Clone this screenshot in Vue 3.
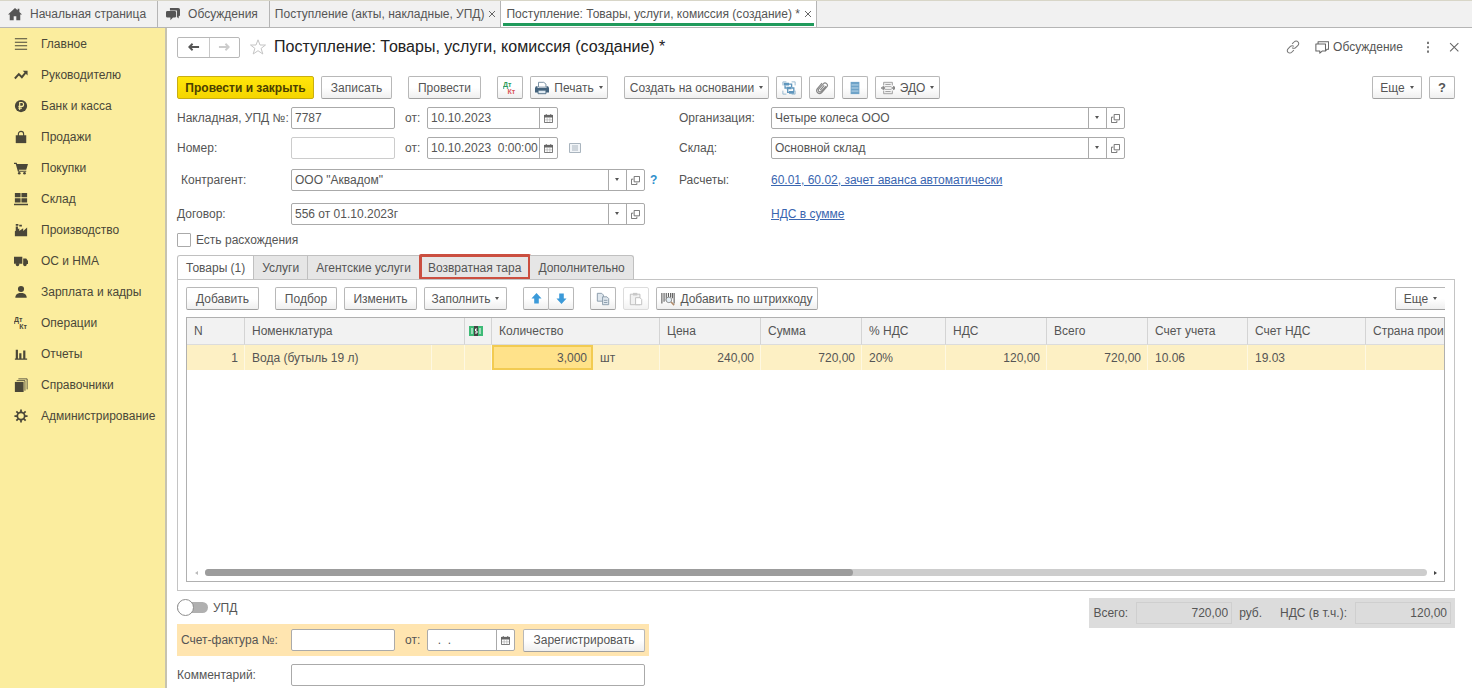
<template>
  <div class="app">
    <nav class="tabs-bar">
      <button
        v-for="tab in windowTabs"
        :key="tab.title"
        class="window-tab"
        :class="{ active: tab.active, closable: tab.closable }"
      >
        <svg v-if="tab.icon" class="icon" viewBox="0 0 16 16" v-html="tab.icon"></svg>
        <span>{{ tab.title }}</span>
        <svg v-if="tab.closable" class="tab-close" viewBox="0 0 8 8"><path d="M1 1l6 6M7 1L1 7" /></svg>
      </button>
    </nav>

    <div class="body">
      <aside class="sidebar">
        <a v-for="item in sections" :key="item.title" href="#" class="section">
          <svg class="icon" viewBox="0 0 16 16" v-html="item.icon"></svg>
          <span>{{ item.title }}</span>
        </a>
      </aside>

      <main class="form">
        <header class="form-header">
          <div class="history">
            <button aria-label="Назад">
              <svg viewBox="0 0 14 10"><path d="M13 5H3M6 1.5L2.5 5L6 8.5" fill="none" stroke="#555" stroke-width="2" /></svg>
            </button>
            <button aria-label="Вперед">
              <svg viewBox="0 0 14 10"><path d="M1 5h10M8 1.5L11.5 5L8 8.5" fill="none" stroke="#ccc" stroke-width="2" /></svg>
            </button>
          </div>
          <svg class="star" viewBox="0 0 16 16"><path d="M8 .8l2 5.200h5.500l-4.400 3.400 1.700 5.600L8 11.700 3.200 15l1.700-5.600L.5 6H6z" /></svg>
          <h1>Поступление: Товары, услуги, комиссия (создание) *</h1>
          <div class="header-actions">
            <button class="plain" aria-label="Ссылка">
              <svg class="icon" viewBox="0 0 16 16"><path d="M7 4.500l2.500-2.500a2.800 2.800 0 0 1 4.200 0a2.800 2.800 0 0 1 0 4L11 8.700a2.800 2.800 0 0 1-4 0M9 11.500l-2.500 2.500a2.800 2.800 0 0 1-4.200 0a2.800 2.800 0 0 1 0-4L5 7.300a2.800 2.800 0 0 1 4 0" fill="none" stroke="#777" stroke-width="1.200" /></svg>
            </button>
            <button class="plain discuss">
              <svg class="icon" viewBox="0 0 16 16"><path d="M1 4.500h11v8H8.500L5.500 15v-2.500H1zM3.500 4.500v-2.500h12v8.500H14l-2 2" fill="none" stroke="#666" stroke-width="1.200" stroke-linejoin="round" /></svg>
              Обсуждение
            </button>
            <button class="plain" aria-label="Меню">
              <svg class="icon" viewBox="0 0 16 16"><path d="M7 2h2v2.500H7zM7 7h2v2.500H7zM7 12h2v2.500H7z" fill="#666" /></svg>
            </button>
            <button class="plain" aria-label="Закрыть">
              <svg class="icon" viewBox="0 0 16 16"><path d="M3.500 3.500l9.500 9.500M13 3.500l-9.500 9.500" stroke="#666" stroke-width="1.200" /></svg>
            </button>
          </div>
        </header>

        <div class="toolbar">
          <button class="btn primary">Провести и закрыть</button>
          <button class="btn w71">Записать</button>
          <button class="btn w73 gap">Провести</button>
          <button class="btn square gap" aria-label="Дт Кт">
            <svg class="icon" viewBox="0 0 16 16">
              <text class="dtkt" x="0" y="7" fill="#2c9a5a">Дт</text>
              <text class="dtkt" x="5" y="15" fill="#d9545a">Кт</text>
            </svg>
          </button>
          <button class="btn w78">
            <svg class="icon" viewBox="0 0 16 16">
              <path d="M4 1.500h6l2.500 2V7H4z" fill="#fff" stroke="#6c8599" />
              <path d="M1 6h2v2h10V6h2l1 2v5H0V8z" fill="#44637d" />
              <path d="M3.500 10.500h9v4h-9z" fill="#dfeaf2" stroke="#44637d" />
            </svg>
            Печать <i class="caret"></i>
          </button>
          <button class="btn w145 gap">Создать на основании <i class="caret"></i></button>
          <button class="btn square" aria-label="Структура подчиненности">
            <svg class="icon" viewBox="0 0 16 16">
              <path d="M1 5V1h4M15 11v4h-4M11 1h4v4M1 11v4h4" fill="none" stroke="#8fb2cc" />
              <path d="M2 2h6v3H2zM5 6.500h6v3H5zM8 11.500h6v3H8z" fill="#5f96bd" />
              <path d="M8 3.500h3V7M3.500 5v3H5M11 8h2.500v4M6.500 9v4H8" fill="none" stroke="#5f96bd" stroke-width="1.500" />
            </svg>
          </button>
          <button class="btn square" aria-label="Файлы">
            <svg class="icon" viewBox="0 0 16 16"><path d="M12.500 6L7 12a2 2 0 0 1-3-2.500L9.500 3.200a2.600 2.600 0 0 1 4 3.500L7.500 13.500a3.400 3.400 0 0 1-5-4.500L8 2.500M10.500 5L6 10.500" fill="none" stroke="#888" stroke-width="1.300" /></svg>
          </button>
          <button class="btn square" aria-label="Список">
            <svg class="icon" viewBox="0 0 16 16">
              <path d="M3 1h10v14H3z" fill="#6ea3c8" />
              <path d="M4 4.500h8M4 8h8M4 11.500h8" stroke="#c5deee" />
            </svg>
          </button>
          <button class="btn w65">
            <svg class="icon" viewBox="0 0 16 16">
              <path d="M3 5V1.500h10V5M3 11v3.500h10V11" fill="#eee" stroke="#999" />
              <path d="M5 4h6M4 6.500h8M4 9.500h8M5 12h6" stroke="#999" />
              <path d="M0 8h4M12 8h4M2 6l2 2-2 2M14 6l2 2-2 2" fill="none" stroke="#888" stroke-width="1.500" />
            </svg>
            ЭДО <i class="caret"></i>
          </button>
          <span class="spacer"></span>
          <button class="btn w50">Еще <i class="caret"></i></button>
          <button class="btn square help">?</button>
        </div>

        <div class="fields">
          <div class="field-row">
            <label for="invoice">Накладная, УПД №:</label>
            <input id="invoice" v-model="doc.invoice" class="box short" type="text" />
            <label for="invoice-date" class="from">от:</label>
            <span class="box date">
              <input id="invoice-date" v-model="doc.invoiceDate" type="text" />
              <button aria-label="Календарь"><svg viewBox="0 0 10 10" v-html="calendar"></svg></button>
            </span>
          </div>
          <div class="field-row">
            <label for="org" class="right-label">Организация:</label>
            <span class="box combo">
              <span class="select-wrap">
                <select id="org"><option>Четыре колеса ООО</option></select>
                <i class="caret"></i>
              </span>
              <button aria-label="Открыть"><svg viewBox="0 0 10 10" v-html="openIcon"></svg></button>
            </span>
          </div>

          <div class="field-row">
            <label for="number">Номер:</label>
            <input id="number" v-model="doc.number" class="box short muted" type="text" />
            <label for="date" class="from">от:</label>
            <span class="box date">
              <input id="date" v-model="doc.date" type="text" />
              <button aria-label="Календарь"><svg viewBox="0 0 10 10" v-html="calendar"></svg></button>
            </span>
            <svg class="note" viewBox="0 0 12 10">
              <path d="M.5.5h11v9H.5z" fill="#f2f5f8" stroke="#a9b4be" />
              <path d="M3 3h6M3 5h6M3 7h6" stroke="#a9b4be" />
            </svg>
          </div>
          <div class="field-row">
            <label for="store" class="right-label">Склад:</label>
            <span class="box combo">
              <span class="select-wrap">
                <select id="store"><option>Основной склад</option></select>
                <i class="caret"></i>
              </span>
              <button aria-label="Открыть"><svg viewBox="0 0 10 10" v-html="openIcon"></svg></button>
            </span>
          </div>

          <div class="field-row tall">
            <label for="partner" class="indent">Контрагент:</label>
            <span class="box combo">
              <span class="select-wrap">
                <select id="partner"><option>ООО "Аквадом"</option></select>
                <i class="caret"></i>
              </span>
              <button aria-label="Открыть"><svg viewBox="0 0 10 10" v-html="openIcon"></svg></button>
            </span>
            <button class="plain hint">?</button>
          </div>
          <div class="field-row tall">
            <span class="right-label">Расчеты:</span>
            <a href="#">60.01, 60.02, зачет аванса автоматически</a>
          </div>

          <div class="field-row tall">
            <label for="contract">Договор:</label>
            <span class="box combo">
              <span class="select-wrap">
                <select id="contract"><option>556 от 01.10.2023г</option></select>
                <i class="caret"></i>
              </span>
              <button aria-label="Открыть"><svg viewBox="0 0 10 10" v-html="openIcon"></svg></button>
            </span>
          </div>
          <div class="field-row tall">
            <span class="right-label"></span>
            <a href="#">НДС в сумме</a>
          </div>
        </div>

        <label class="check">
          <input v-model="doc.hasDiff" type="checkbox" />
          Есть расхождения
        </label>

        <div class="page-tabs">
          <button
            v-for="page in pages"
            :key="page"
            :class="{ current: page === currentPage, marked: page === 'Возвратная тара' }"
            @click="currentPage = page"
          >
            {{ page }}
          </button>
        </div>

        <section class="panel">
          <div class="panel-toolbar">
            <button class="btn w73">Добавить</button>
            <button class="btn w62 gap">Подбор</button>
            <button class="btn w73">Изменить</button>
            <button class="btn w83">Заполнить <i class="caret"></i></button>
            <div class="pair gap">
              <button class="btn square" aria-label="Вверх">
                <svg class="icon small" viewBox="0 0 12 12"><path d="M6 0l5.500 6H8.500v5.500h-5V6H.5z" fill="#3b9ad9" /></svg>
              </button>
              <button class="btn square" aria-label="Вниз">
                <svg class="icon small" viewBox="0 0 12 12"><path d="M6 12L.5 6h3V.5h5V6h3z" fill="#3b9ad9" /></svg>
              </button>
            </div>
            <button class="btn square gap" aria-label="Копировать">
              <svg class="icon" viewBox="0 0 16 16">
                <path d="M1.500 1.500h5l2 2v7h-7z" fill="#dfe7ee" stroke="#8496a5" />
                <path d="M7.500 5.500h5l2 2v7h-7z" fill="#dfe7ee" stroke="#8496a5" />
                <path d="M9 9.500h4M9 12h4" stroke="#8496a5" />
              </svg>
            </button>
            <button class="btn square faded" aria-label="Вставить">
              <svg class="icon" viewBox="0 0 16 16">
                <path d="M1.500 2.500h11v12h-11z" fill="#eee" stroke="#aaa" />
                <path d="M4.500 1h5v3h-5z" fill="#bbb" />
                <path d="M7.500 6.500h5l2 2v6h-7z" fill="#fff" stroke="#aaa" />
              </svg>
            </button>
            <button class="btn w162">
              <svg class="icon" viewBox="0 0 16 16">
                <path d="M1 1v12M3.500 1v10M6 1v9M8.500 1v6M11 1v5M13 1v6M15 1v12" stroke="#555" stroke-width="1.200" />
                <circle cx="9" cy="9" r="3.200" fill="#e4eef5" stroke="#888" />
                <path d="M11.500 11.500l3.500 3.500" stroke="#b08b6a" stroke-width="1.800" />
              </svg>
              Добавить по штрихкоду
            </button>
            <span class="spacer"></span>
            <button class="btn w50 cut">Еще <i class="caret"></i></button>
          </div>

          <div class="grid">
            <table>
              <colgroup>
                <col v-for="(w, i) in columnWidths" :key="i" :style="{ width: w + 'px' }" />
              </colgroup>
              <thead>
                <tr>
                  <th>N</th>
                  <th colspan="2">Номенклатура</th>
                  <th class="mark">
                    <svg viewBox="0 0 14 10">
                      <path d="M0 0h14v10H0z" fill="#3dba76" />
                      <path d="M2 2h2v6H2zM10 2h2v6h-2z" fill="#9fdcba" />
                      <path d="M5 0h4v10H5z" fill="#444" />
                      <path d="M8 3H6.500v2h1.500v2H6" fill="none" stroke="#fff" />
                    </svg>
                  </th>
                  <th colspan="2">Количество</th>
                  <th>Цена</th>
                  <th>Сумма</th>
                  <th>% НДС</th>
                  <th>НДС</th>
                  <th>Всего</th>
                  <th>Счет учета</th>
                  <th>Счет НДС</th>
                  <th>Страна происхождения</th>
                </tr>
              </thead>
              <tbody>
                <tr v-for="row in goods" :key="row.n">
                  <td class="num">{{ row.n }}</td>
                  <td>{{ row.name }}</td>
                  <td></td>
                  <td></td>
                  <td class="num editing">{{ row.count }}</td>
                  <td>{{ row.unit }}</td>
                  <td class="num">{{ row.price }}</td>
                  <td class="num">{{ row.sum }}</td>
                  <td>{{ row.vatRate }}</td>
                  <td class="num">{{ row.vat }}</td>
                  <td class="num">{{ row.total }}</td>
                  <td>{{ row.account }}</td>
                  <td>{{ row.vatAccount }}</td>
                  <td></td>
                </tr>
              </tbody>
            </table>
            <div class="scroll">
              <i class="arrow left"></i>
              <div class="track"><div class="thumb"></div></div>
              <i class="arrow right"></i>
            </div>
          </div>
        </section>

        <footer class="bottom">
          <div class="bottom-left">
            <label class="toggle">
              <input v-model="doc.upd" type="checkbox" />
              УПД
            </label>
            <div class="invoice-row">
              <label for="sf" class="indent">Счет-фактура №:</label>
              <input id="sf" v-model="doc.sf" class="box short" type="text" />
              <label for="sf-date" class="from">от:</label>
              <span class="box date small-date">
                <input id="sf-date" v-model="doc.sfDate" type="text" />
                <button aria-label="Календарь"><svg viewBox="0 0 10 10" v-html="calendar"></svg></button>
              </span>
              <button class="btn w122">Зарегистрировать</button>
            </div>
            <div class="comment-row">
              <label for="comment">Комментарий:</label>
              <input id="comment" v-model="doc.comment" class="box wide" type="text" />
            </div>
          </div>
          <div class="totals">
            <label for="total">Всего:</label>
            <input id="total" value="720,00" type="text" readonly />
            <span class="currency">руб.</span>
            <label for="total-vat">НДС (в т.ч.):</label>
            <input id="total-vat" value="120,00" type="text" readonly />
          </div>
        </footer>
      </main>
    </div>
  </div>
</template>

<script setup>
import { ref, reactive } from 'vue'

const windowTabs = [
  { title: 'Начальная страница', icon: '<path d="M8 1L0 8.500h2V15h4.500v-4.500h3V15H14V8.500h2L13 5.700V2h-2v1.800z"/>' },
  { title: 'Обсуждения', icon: '<path d="M4.500 1H14q2 0 2 2v6q0 1.500-1.500 1.500V13l-2-1.500V4h-8z"/><path d="M1.500 4.500h8.500q1.500 0 1.500 1.500v4.500q0 1.500-1.500 1.500H8L5 15v-3H1.500Q0 12 0 10.500V6q0-1.500 1.500-1.500z"/>' },
  { title: 'Поступление (акты, накладные, УПД)', closable: true },
  { title: 'Поступление: Товары, услуги, комиссия (создание) *', closable: true, active: true }
]

const sections = [
  { title: 'Главное', icon: '<path d="M1 1.500h14v1H1zM1 5.500h14v1H1zM1 9.500h14v1H1zM1 13.500h14v1H1z"/>' },
  { title: 'Руководителю', icon: '<path d="M1 12l4.500-5 3.500 3.500 4-5" fill="none" stroke="currentColor" stroke-width="2.200"/><path d="M10 3h5.500v5.500z"/>' },
  { title: 'Банк и касса', icon: '<circle cx="8" cy="8" r="7"/><path d="M6.500 12.500V4h2.200a2.200 2.200 0 0 1 0 4.500H5M5 10.500h4" fill="none" stroke="#fbed9e" stroke-width="1.300"/>' },
  { title: 'Продажи', icon: '<path d="M2 6h12v9H2z"/><path d="M5 8V4.500a3 3 0 0 1 6 0V8" fill="none" stroke="currentColor" stroke-width="1.300"/>' },
  { title: 'Покупки', icon: '<path d="M0 2h3l.6 1.500H16L14 10H5.500l.3 1H14v1.300H4.500L2 3.300H0z"/><circle cx="6" cy="14" r="1.500"/><circle cx="12" cy="14" r="1.500"/>' },
  { title: 'Склад', icon: '<path d="M1 1h6.500v5H1zM8.500 1H15v5H8.500zM1 7h6.500v5H1zM8.500 7H15v5H8.500zM0 13.500h16V15H0z"/>' },
  { title: 'Производство', icon: '<path d="M1 15V9.500L6 6v3l4.500-3v3L15 5v10zM2 4h2.500v4L2 9.500zM2 1h3v2H2zM6 2h3v2H6z"/>' },
  { title: 'ОС и НМА', icon: '<path d="M0 3h9.500v8H0zM10.500 5H14l2 3v3.500h-5.500z"/><circle cx="4" cy="12" r="2"/><circle cx="12.500" cy="12" r="2"/>' },
  { title: 'Зарплата и кадры', icon: '<circle cx="8" cy="4.500" r="3.500"/><path d="M1.500 14.500c0-4 3-5 4.500-5.500h4c1.500.5 4.500 1.500 4.500 5.500z"/>' },
  { title: 'Операции', icon: '<text x="0" y="7" font-size="8" font-weight="bold">Дт</text><text x="6" y="15" font-size="8" font-weight="bold">Кт</text>' },
  { title: 'Отчеты', icon: '<path d="M2 3h2.500v10H2zM6 7h2.500v6H6zM10.500 4H13v9h-2.500zM1 13h14v1.500H1z"/>' },
  { title: 'Справочники', icon: '<path d="M1 4.500h10V16H1z"/><path d="M3 3h9.500v11.500M5 1h10v12" fill="none" stroke="currentColor"/>' },
  { title: 'Администрирование', icon: '<circle cx="8" cy="8" r="4.200" fill="none" stroke="currentColor" stroke-width="2"/><path d="M8 .5v3M8 12.500v3M.5 8h3M12.500 8h3M2.700 2.700l2 2M11.300 11.300l2 2M2.700 13.300l2-2M11.300 4.700l2-2" stroke="currentColor" stroke-width="2"/>' }
]

const calendar = '<path d="M.5 1.500h9v8h-9z" fill="#fff" stroke="#666"/><path d="M0 1h10v3H0zM2 0h1v2H2zM7 0h1v2H7z" fill="#666"/><path d="M3.500 4v5M6.500 4v5M1 6.500h8" stroke="#aaa" stroke-width=".7"/>'
const openIcon = '<path d="M3.500.5h6v6h-6z" fill="#fff" stroke="#666"/><path d="M2.500 3.500h-2v6h6v-2" fill="none" stroke="#666"/>'

const doc = reactive({
  invoice: '7787',
  invoiceDate: '10.10.2023',
  number: '',
  date: '10.10.2023  0:00:00',
  hasDiff: false,
  upd: false,
  sf: '',
  sfDate: '  .  .',
  comment: ''
})

const pages = ['Товары (1)', 'Услуги', 'Агентские услуги', 'Возвратная тара', 'Дополнительно']
const currentPage = ref('Товары (1)')

const columnWidths = [58, 187, 33, 27, 101, 67, 101, 101, 84, 101, 101, 100, 118, 160]

const goods = ref([
  {
    n: 1,
    name: 'Вода (бутыль 19 л)',
    count: '3,000',
    unit: 'шт',
    price: '240,00',
    sum: '720,00',
    vatRate: '20%',
    vat: '120,00',
    total: '720,00',
    account: '10.06',
    vatAccount: '19.03'
  }
])
</script>

<style>
body {
  background: #fff;
}
</style>

<style scoped>
.app {
  display: flex;
  flex-direction: column;
  min-height: 100vh;
  font-family: "Liberation Sans", Arial, sans-serif;
  font-size: 12px;
  line-height: 16px;
  color: #555;
}
.app * {
  box-sizing: border-box;
}
button, input, select {
  font: inherit;
  color: inherit;
  margin: 0;
}
button {
  padding: 0;
  background: none;
  border: none;
}
.icon {
  width: 14px;
  height: 14px;
  flex: none;
  fill: currentColor;
}
.icon.small {
  width: 11px;
  height: 11px;
}

/* верхняя панель окон */
.tabs-bar {
  display: flex;
  height: 28px;
  background: #f1f1f1;
  border-top: 1px solid #d8d6c8;
  border-bottom: 1px solid #b5b5b5;
}
.window-tab {
  display: flex;
  align-items: center;
  gap: 8px;
  padding: 0 11px 0 8px;
  border-right: 1px solid #b5b5b5;
  white-space: nowrap;
}
.window-tab.closable {
  gap: 4px;
  padding: 0 4px 0 5px;
}
.tab-close {
  width: 8px;
  height: 8px;
  stroke: #666;
}
.window-tab.active {
  background: linear-gradient(#1f9a5b, #1f9a5b) center bottom 1px / calc(100% - 4px) 3px no-repeat #fff;
}

.body {
  display: flex;
  flex: 1;
}
.sidebar {
  flex: none;
  width: 167px;
  background: #fbed9e;
  border-right: 2px solid #c6c3b0;
}
.section {
  display: flex;
  align-items: center;
  gap: 13px;
  height: 31px;
  padding-left: 14px;
  color: #4a4738;
  text-decoration: none;
}

.form {
  display: flex;
  flex-direction: column;
  flex: 1;
  min-width: 0;
  padding: 8px 17px 2px 10px;
}
.form-header {
  display: flex;
  align-items: center;
  height: 22px;
}
.history {
  display: flex;
  height: 21px;
  border: 1px solid #b8b8b8;
  border-radius: 2px;
}
.history button {
  width: 31px;
}
.history button + button {
  width: 30px;
  border-left: 1px solid #c8c8c8;
}
.history svg {
  width: 13px;
  height: 10px;
  display: block;
  margin: 0 auto;
}
.star {
  width: 16px;
  height: 16px;
  margin: 0 8px 0 10px;
  fill: none;
  stroke: #c4c4c4;
}
h1 {
  margin: 0;
  font-size: 16px;
  font-weight: normal;
  line-height: 20px;
  color: #222;
}
.header-actions {
  display: flex;
  align-items: center;
  gap: 12px;
  margin-left: auto;
  margin-right: -6px;
}
.plain {
  display: flex;
  align-items: center;
}
.discuss {
  gap: 4px;
  margin: 0 6px 0 3px;
}

/* кнопки */
.toolbar, .panel-toolbar {
  display: flex;
  align-items: center;
  gap: 7px;
}
.toolbar {
  margin-top: 18px;
}
.btn {
  display: flex;
  align-items: center;
  justify-content: center;
  gap: 5px;
  height: 23px;
  padding: 0 3px;
  background: linear-gradient(#fff, #fff 50%, #efefef);
  border: 1px solid #b8b8b8;
  border-bottom-color: #a0a0a0;
  border-radius: 2px;
  white-space: nowrap;
}
.btn.primary {
  width: 137px;
  background: linear-gradient(#ffe60a, #f5d500);
  border-color: #c9ae12;
  font-weight: bold;
  color: #4a4000;
}
.gap {
  margin-left: 9px;
}
.square {
  width: 26px;
}
.w50 { width: 50px; }
.w62 { width: 62px; }
.w65 { width: 65px; }
.w71 { width: 71px; }
.w73 { width: 73px; }
.w78 { width: 78px; }
.w83 { width: 83px; }
.w122 { width: 122px; }
.w145 { width: 145px; }
.w162 { width: 162px; }
.help {
  font-weight: bold;
  font-size: 13px;
}
.dtkt {
  font-size: 8px;
  font-weight: bold;
}
.spacer {
  flex: 1;
}
.caret {
  width: 0;
  height: 0;
  border: 2px solid transparent;
  border-top: 3px solid #555;
  border-bottom: none;
}

/* реквизиты документа */
.fields {
  display: grid;
  grid-template-columns: 502px minmax(0, 446px);
  margin-top: 4px;
}
.field-row {
  display: flex;
  align-items: center;
  height: 30px;
}
.field-row.tall {
  height: 34px;
}
.fields label, .invoice-row label, .comment-row label {
  width: 114px;
  flex: none;
  white-space: nowrap;
}
.fields .right-label {
  width: 92px;
  flex: none;
}
.fields .from, .invoice-row .from {
  width: 22px;
  margin-left: 10px;
}
.indent {
  padding-left: 4px;
}
.box {
  height: 22px;
  background: #fff;
  border: 1px solid #aaa;
  border-radius: 2px;
  padding: 0 3px;
}
.short {
  width: 104px;
}
.muted {
  border-color: #ccc;
}
.date, .combo {
  display: flex;
  padding: 0;
}
.date {
  width: 131px;
}
.small-date {
  width: 88px;
}
.date input {
  flex: 1;
  min-width: 0;
  padding: 0 0 0 3px;
  border: none;
  background: none;
  white-space: pre;
}
.box button {
  flex: none;
  width: 18px;
  border-left: 1px solid #aaa;
}
.box button svg {
  display: block;
  width: 9px;
  height: 9px;
  margin: 0 auto;
}
.combo {
  width: 354px;
}
.select-wrap {
  position: relative;
  display: flex;
  flex: 1;
}
.select-wrap select {
  flex: 1;
  appearance: none;
  padding: 0 20px 0 3px;
  border: none;
  background: linear-gradient(#aaa, #aaa) right 17px top / 1px 100% no-repeat;
}
.select-wrap .caret {
  position: absolute;
  right: 7px;
  top: 8px;
  pointer-events: none;
}
.hint {
  margin-left: 5px;
  color: #2f8fcc;
  font-weight: bold;
}
.note {
  width: 12px;
  height: 10px;
  margin-left: 11px;
}
a {
  color: #3a66b0;
}
.check {
  display: flex;
  align-items: center;
  gap: 5px;
  height: 16px;
  margin-top: 1px;
}
.check input {
  appearance: none;
  width: 14px;
  height: 14px;
  border: 1px solid #aaa;
  border-radius: 1px;
  background: #fff;
}

/* страницы табличной части */
.page-tabs {
  display: flex;
  margin-top: 7px;
}
.page-tabs button {
  height: 24px;
  padding: 0 8px;
  background: #e6e6e6;
  border: 1px solid #c0c0c0;
  border-left: none;
  border-bottom: none;
}
.page-tabs button:first-child {
  border-left: 1px solid #c0c0c0;
  border-radius: 3px 0 0 0;
}
.page-tabs button:last-child {
  border-radius: 0 3px 0 0;
}
.page-tabs .current {
  background: #fff;
}
.page-tabs .marked {
  outline: 3px solid #cb4f40;
  outline-offset: -2px;
  border-radius: 1px;
}
.panel {
  display: flex;
  flex-direction: column;
  flex: 1;
  padding: 7px 9px 8px 8px;
  border: 1px solid #c4c4c4;
}
.cut {
  border-right: none;
  border-radius: 2px 0 0 2px;
}
.pair {
  display: flex;
}
.pair .btn + .btn {
  margin-left: -1px;
}
.faded {
  border-color: #d4d4d4;
  opacity: 0.8;
}
.grid {
  display: flex;
  flex-direction: column;
  flex: 1;
  margin-top: 7px;
  border: 1px solid #b0b0b0;
  overflow: hidden;
}
table {
  table-layout: fixed;
  width: 1339px;
  border-collapse: separate;
  border-spacing: 0;
}
th {
  height: 27px;
  padding: 0 7px;
  text-align: left;
  font-weight: normal;
  white-space: nowrap;
  background: #f2f2f2;
  border-right: 1px solid #d4d4d4;
  border-bottom: 1px solid #dcdcdc;
}
th.mark {
  padding: 0 4px;
}
.mark svg {
  display: block;
  width: 14px;
  height: 10px;
}
td {
  height: 25px;
  padding: 0 7px;
  background: #fdf0c4;
  border-right: 1px solid #fef8e2;
  white-space: nowrap;
}
.num {
  padding: 0 6px;
  text-align: right;
}
.editing {
  background: #ffe28a;
  border: 2px solid #f2cb52;
  padding: 0 4px;
}
.scroll {
  display: flex;
  align-items: center;
  gap: 7px;
  margin-top: auto;
  padding: 5px 7px 5px 8px;
}
.track {
  flex: 1;
  height: 7px;
  border-radius: 4px;
  background: #cdcdcd;
}
.thumb {
  width: 53%;
  height: 7px;
  border-radius: 4px;
  background: #9c9c9c;
}
.arrow {
  border: 2px solid transparent;
}
.arrow.left {
  border-right: 3px solid #bbb;
  border-left: none;
}
.arrow.right {
  border-left: 3px solid #444;
  border-right: none;
}

/* подвал */
.bottom {
  display: flex;
  justify-content: space-between;
  align-items: flex-start;
  margin-top: 7px;
}
.toggle {
  display: flex;
  align-items: center;
  gap: 5px;
  height: 19px;
}
.toggle input {
  appearance: none;
  display: flex;
  align-items: center;
  width: 31px;
  height: 11px;
  border-radius: 6px;
  background: #b0b0b0;
}
.toggle input::before {
  content: "";
  width: 17px;
  height: 17px;
  flex: none;
  box-sizing: border-box;
  border: 1px solid #8e8e8e;
  border-radius: 50%;
  background: #fff;
}
.invoice-row {
  display: flex;
  align-items: center;
  height: 32px;
  margin-top: 7px;
  padding-right: 4px;
  background: #ffe5b0;
}
.invoice-row .btn {
  margin-left: 8px;
}
.comment-row {
  display: flex;
  align-items: center;
  margin-top: 8px;
}
.wide {
  width: 354px;
}
.totals {
  display: flex;
  align-items: center;
  height: 30px;
  padding: 0 4px;
  background: #dcdcdc;
}
.totals input {
  width: 96px;
  height: 22px;
  margin-left: 8px;
  padding: 0 3px;
  text-align: right;
  background: none;
  border: 1px solid #cfcfcf;
}
.currency {
  margin: 0 18px 0 7px;
}
</style>
